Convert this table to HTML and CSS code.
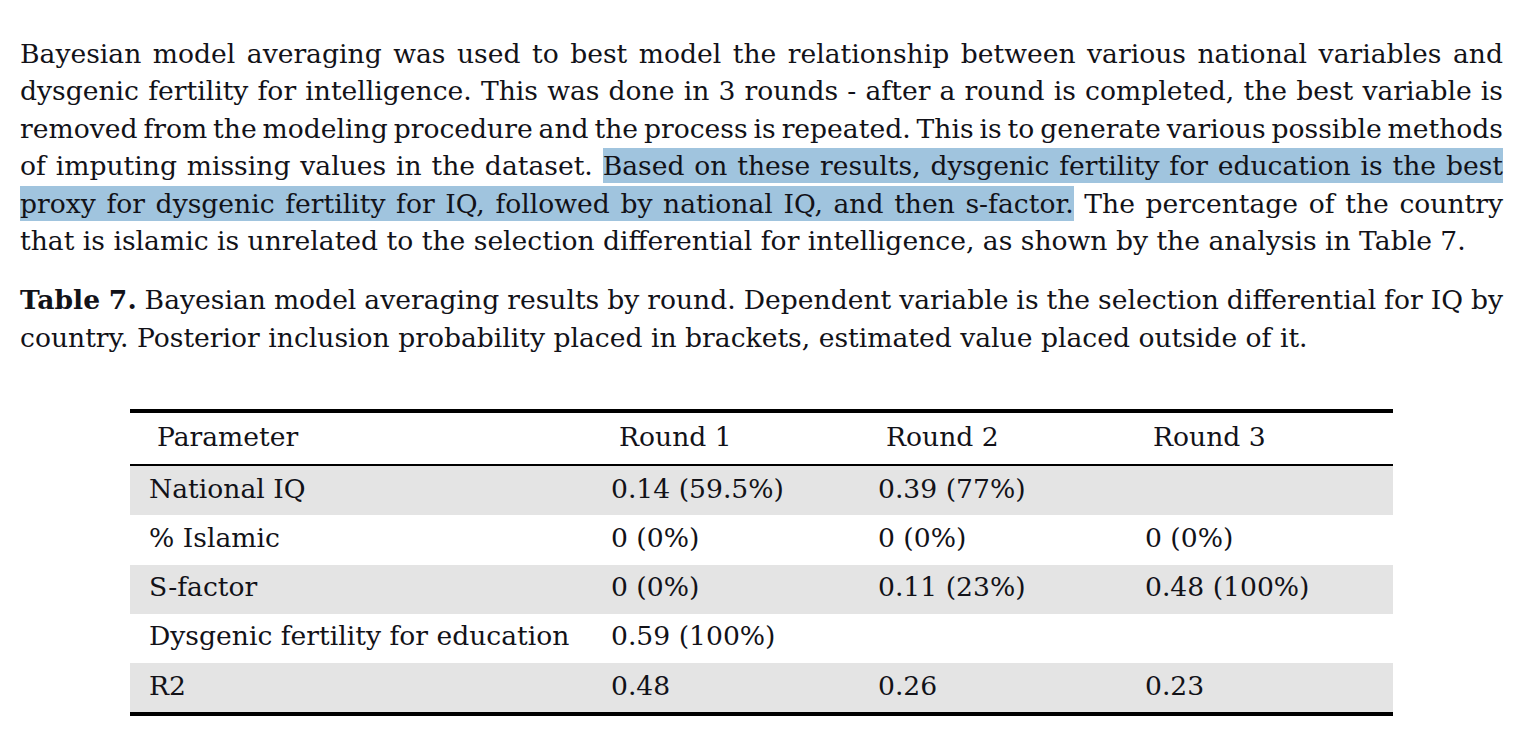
FILE: index.html
```html
<!DOCTYPE html>
<html lang="en">
<head>
<meta charset="utf-8">
<title>Table 7</title>
<link rel="stylesheet" href="styles.css">
</head>
<body>
<main class="page">
  <p class="para">
    <span class="line">Bayesian model averaging was used to best model the relationship between various national variables and</span>
    <span class="line">dysgenic fertility for intelligence. This was done in 3 rounds - after a round is completed, the best variable is</span>
    <span class="line">removed from the modeling procedure and the process is repeated. This is to generate various possible methods</span>
    <span class="line">of imputing missing values in the dataset. <span class="hl">Based on these results, dysgenic fertility for education is the best</span></span>
    <span class="line"><span class="hl">proxy for dysgenic fertility for IQ, followed by national IQ, and then s-factor.</span> The percentage of the country</span>
    <span class="line last">that is islamic is unrelated to the selection differential for intelligence, as shown by the analysis in Table 7.</span>
  </p>
  <p class="para caption">
    <span class="line"><b>Table 7.</b> Bayesian model averaging results by round. Dependent variable is the selection differential for IQ by</span>
    <span class="line last">country. Posterior inclusion probability placed in brackets, estimated value placed outside of it.</span>
  </p>
  <table class="results">
    <colgroup>
      <col class="c1"><col class="c2"><col class="c2"><col class="c2">
    </colgroup>
    <thead>
      <tr><th>Parameter</th><th>Round 1</th><th>Round 2</th><th>Round 3</th></tr>
    </thead>
    <tbody>
      <tr class="shade"><td>National IQ</td><td>0.14 (59.5%)</td><td>0.39 (77%)</td><td></td></tr>
      <tr><td>% Islamic</td><td>0 (0%)</td><td>0 (0%)</td><td>0 (0%)</td></tr>
      <tr class="shade"><td>S-factor</td><td>0 (0%)</td><td>0.11 (23%)</td><td>0.48 (100%)</td></tr>
      <tr><td>Dysgenic fertility for education</td><td>0.59 (100%)</td><td></td><td></td></tr>
      <tr class="shade"><td>R2</td><td>0.48</td><td>0.26</td><td>0.23</td></tr>
    </tbody>
  </table>
</main>
</body>
</html>
```
FILE: styles.css
```css
html, body {
  margin: 0;
  padding: 0;
  background: #ffffff;
}
body {
  font-family: "DejaVu Serif", "Liberation Serif", serif;
  color: #121218;
}
.page {
  padding: 35px 28px 0 20px;
}
.para {
  margin: 0;
  font-size: 26.6px;
  line-height: 37.4px;
}
.line {
  display: block;
  white-space: nowrap;
  word-spacing: -3px;
  text-align: justify;
  text-align-last: justify;
}
.line.last {
  text-align-last: left;
  word-spacing: 0;
}
.hl {
  background: #a0c4de;
  padding: 2px 0 2px;
}
.caption {
  margin-top: 22px;
}
.caption b {
  font-weight: bold;
}
.results {
  margin: 53px 0 0 110px;
  border-collapse: collapse;
  table-layout: fixed;
  width: 1263px;
  font-size: 26.6px;
  border-top: 4px solid #000;
  border-bottom: 4px solid #000;
}
.results col.c1 { width: 462px; }
.results col.c2 { width: 267px; }
.results th {
  font-weight: normal;
  text-align: left;
  height: 46px;
  padding: 0 0 5px 27px;
  border-bottom: 2px solid #000;
  vertical-align: middle;
}
.results td {
  height: 44.2px;
  padding: 0 0 5px 19px;
  vertical-align: middle;
  white-space: nowrap;
}
.results tr.shade td {
  background: #e4e4e4;
}
```
